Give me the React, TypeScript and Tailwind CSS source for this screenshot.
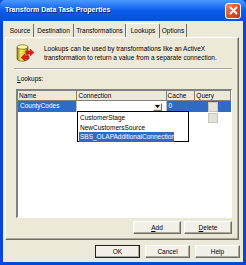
import React from "react";

const font = "font-['Liberation_Sans',Arial,sans-serif]";

const DbIcon = () => (
  <svg width="20" height="20" viewBox="0 0 20 20">
    <defs>
      <linearGradient id="cyl" x1="0" x2="1" y1="0" y2="0">
        <stop offset="0" stopColor="#8a7a10" />
        <stop offset="0.35" stopColor="#f7ec6a" />
        <stop offset="0.7" stopColor="#d8c22a" />
        <stop offset="1" stopColor="#7a6a08" />
      </linearGradient>
    </defs>
    <path d="M2 4 V16 A5.5 2.2 0 0 0 13 16 V4 Z" fill="url(#cyl)" stroke="#5a4c00" strokeWidth="0.6" />
    <ellipse cx="7.5" cy="4" rx="5.5" ry="2.2" fill="#fbf5a0" stroke="#5a4c00" strokeWidth="0.6" />
    <path d="M11 8 H15 V6 L19 9.5 L15 13 V11 H11 Z" fill="#e02020" stroke="#800" strokeWidth="0.4" />
    <path d="M14 13 H10 V11 L6 14.5 L10 18 V16 H14 Z" fill="#e02020" stroke="#800" strokeWidth="0.4" />
  </svg>
);

const Btn = ({ children, w, def }: { children: React.ReactNode; w: string; def?: boolean }) => (
  <div
    className={`${w} h-[13px] flex items-center justify-center text-[6.5px] text-black bg-[#F2F0E8] border ${
      def ? "border-[#202020]" : "border-t-white border-l-white border-r-[#716F64] border-b-[#716F64]"
    } shadow-[inset_-1px_-1px_0_#ACA899]`}
  >
    {children}
  </div>
);

export default function App() {
  return (
    <div className={`w-[246px] h-[265px] flex flex-col bg-[#0A46D6] ${font}`}>
      {/* title bar */}
      <div className="h-[21px] shrink-0 flex items-center justify-between pl-[5px] pr-[5px] bg-linear-to-b from-[#4A98FF] via-[#0A5CEB] to-[#0A50DC] rounded-t-[5px]">
        <span className="text-white font-bold text-[7px] [text-shadow:1px_1px_0_#0A1F6E]">
          Transform Data Task Properties
        </span>
        <div className="w-[16px] h-[16px] rounded-[3px] border border-white bg-linear-to-br from-[#F08B6A] via-[#E0502A] to-[#C03A14] flex items-center justify-center">
          <svg width="9" height="9" viewBox="0 0 9 9">
            <path d="M1.5 1.5 L7.5 7.5 M7.5 1.5 L1.5 7.5" stroke="white" strokeWidth="1.8" strokeLinecap="round" />
          </svg>
        </div>
      </div>

      <div className="flex-1 mx-[3px] mb-[3px] bg-[#ECE9D8] flex flex-col pt-[1px]">
        {/* tabs */}
        <div className="h-[15px] shrink-0 flex items-end pl-[4px] text-[6.5px] text-black">
          <div className="w-[27px] h-[13px] flex items-center justify-center border-r border-[#716F64]">Source</div>
          <div className="w-[40px] h-[13px] flex items-center justify-center border-r border-[#716F64]">Destination</div>
          <div className="w-[52px] h-[13px] flex items-center justify-center border-r border-[#716F64]">Transformations</div>
          <div className="w-[34px] h-[15px] flex items-center justify-center border-l border-t border-white border-r border-r-[#716F64] bg-[#ECE9D8] rounded-t-[2px] -mb-[1px] relative">
            Lookups
          </div>
          <div className="w-[27px] h-[13px] flex items-center justify-center border-r border-[#716F64]">Options</div>
        </div>

        {/* panel */}
        <div className="ml-[2px] mr-[4px] h-[203px] shrink-0 border-l border-t border-white border-r border-b border-r-[#716F64] border-b-[#716F64] shadow-[inset_-1px_-1px_0_#ACA899] flex flex-col pl-[8px] pr-[6px] text-[6.5px] text-black">
          <div className="flex items-center gap-[9px] h-[26px] mt-[2px] pl-[1px]">
            <DbIcon />
            <div className="leading-[9px]">
              <div>Lookups can be used by transformations like an ActiveX</div>
              <div>transformation to return a value from a separate connection.</div>
            </div>
          </div>
          <div className="mt-[2px] h-[2px] border-t border-[#ACA899] border-b border-b-white" />
          <div className="mt-[4px] pl-[3px] h-[9px] leading-[9px]">
            <span className="underline">L</span>ookups:
          </div>
          {/* grid */}
          <div className="mt-[6px] ml-[2px] h-[129px] bg-white border-l-2 border-t-2 border-l-[#808080] border-t-[#808080] border-r border-b border-r-white border-b-white relative">
            <div className="flex h-[10px] bg-[#ECE9D8] leading-[9px]">
              <div className="w-[60px] border-r border-b border-[#808080] pl-[1px]">Name</div>
              <div className="w-[90px] border-r border-b border-[#808080] pl-[1px]">Connection</div>
              <div className="w-[29px] border-r border-b border-[#808080] pl-[1px]">Cache</div>
              <div className="w-[36px] border-r border-b border-[#808080] pl-[1px]">Query</div>
            </div>
            <div className="flex h-[11px] leading-[10px]">
              <div className="w-[60px] bg-[#316AC5] text-white pl-[2px] border-r border-[#C0C0C0]">CountyCodes</div>
              <div className="w-[90px] bg-white border-r border-[#C0C0C0] flex justify-end items-center pr-[4px]">
                <div className="w-[9px] h-[8px] bg-[#ECE9D8] border border-t-white border-l-white border-r-[#716F64] border-b-[#716F64] flex items-center justify-center">
                  <svg width="5" height="3" viewBox="0 0 5 3">
                    <path d="M0 0 H5 L2.5 3 Z" fill="black" />
                  </svg>
                </div>
              </div>
              <div className="w-[29px] bg-[#316AC5] text-white pl-[2px]">0</div>
              <div className="w-[36px] bg-[#316AC5] flex items-center pl-[13px]">
                <div className="w-[10px] h-[10px] bg-[#E4E2D8] border border-[#C8C6BC]" />
              </div>
            </div>
            <div className="flex h-[11px]">
              <div className="w-[179px]" />
              <div className="w-[36px] flex items-center pl-[13px]">
                <div className="w-[10px] h-[10px] bg-[#E4E2D8] border border-[#C8C6BC]" />
              </div>
            </div>
            {/* dropdown list */}
            <div className="absolute left-[59px] top-[20px] w-[112px] h-[31px] bg-white border border-black flex flex-col pt-[1px] pl-[1px] leading-[9.5px]">
              <div className="pl-[1px]">CustomerStage</div>
              <div className="pl-[1px]">NewCustomersSource</div>
              <div className="pl-[1px] w-[95px] bg-[#316AC5] text-white">SBS_OLAPAdditionalConnection</div>
            </div>
          </div>
          <div className="mt-[3px] flex justify-end gap-[3px]">
            <Btn w="w-[48px]">
              <span className="underline">A</span>dd
            </Btn>
            <Btn w="w-[48px]">
              <span className="underline">D</span>elete
            </Btn>
          </div>
        </div>

        {/* bottom buttons */}
        <div className="mt-[5px] flex justify-end gap-[5px] pr-[3px]">
          <Btn w="w-[45px]" def>
            OK
          </Btn>
          <Btn w="w-[45px]">Cancel</Btn>
          <Btn w="w-[45px]">Help</Btn>
        </div>
      </div>
    </div>
  );
}
